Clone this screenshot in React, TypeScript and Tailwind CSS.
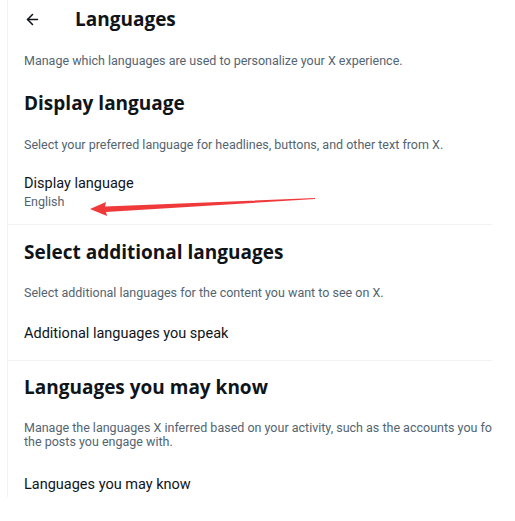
import { ArrowLeft } from 'lucide-react'

const FONT = { fontFamily: '"Open Sans", "Noto Sans", sans-serif' }
const BODY = { fontFamily: 'Roboto, "Open Sans", sans-serif' }

function Divider() {
  return <div className="h-px bg-[#eff3f4] w-full" />
}

function Heading({ children }: { children: React.ReactNode }) {
  return <h2 className="text-[19px] font-bold text-[#0f1419] leading-6">{children}</h2>
}

function Note({ children }: { children: React.ReactNode }) {
  return (
    <p className="text-[12.5px] text-[#536471] leading-[14px] whitespace-nowrap" style={BODY}>
      {children}
    </p>
  )
}

function Row({ label, value }: { label: string; value?: string }) {
  return (
    <div style={BODY}>
      <div className="text-[14.5px] text-[#0f1419] leading-5">{label}</div>
      {value && <div className="text-[12.5px] text-[#536471] leading-4">{value}</div>}
    </div>
  )
}

function RedArrow() {
  return (
    <svg className="absolute left-[88px] top-[196px] pointer-events-none" width="230" height="22" viewBox="0 0 230 22">
      <polygon points="2,13 18,6 17,10.5 227,2 227,3 18,16 19,20" fill="#f03a3a" />
    </svg>
  )
}

export default function App() {
  return (
    <div className="relative w-[515px] h-[521px] bg-white overflow-hidden" style={FONT}>
      <div className="ml-[7px] w-[485px] h-[497px] border-l border-[#eff3f4] overflow-hidden">
        <header className="flex items-center h-[38px] px-4">
          <ArrowLeft className="w-[17px] h-[17px] text-[#0f1419]" strokeWidth={2.2} />
          <h1 className="ml-[34px] text-[19px] font-bold text-[#0f1419]">Languages</h1>
        </header>

        <div className="px-4 pt-4 pb-3">
          <Note>Manage which languages are used to personalize your X experience.</Note>
        </div>

        <section>
          <div className="px-4 pt-[11px] pb-1">
            <Heading>Display language</Heading>
          </div>
          <div className="px-4 pt-[19px] pb-3">
            <Note>Select your preferred language for headlines, buttons, and other text from X.</Note>
          </div>
          <div className="px-4 pt-[10px] pb-[14px]">
            <Row label="Display language" value="English" />
          </div>
          <Divider />
        </section>

        <section>
          <div className="px-4 pt-[15px] pb-1">
            <Heading>Select additional languages</Heading>
          </div>
          <div className="px-4 pt-[18px] pb-3">
            <Note>Select additional languages for the content you want to see on X.</Note>
          </div>
          <div className="px-4 pt-[12px] pb-[16px]">
            <Row label="Additional languages you speak" />
          </div>
          <Divider />
        </section>

        <section>
          <div className="px-4 pt-[14px] pb-1">
            <Heading>Languages you may know</Heading>
          </div>
          <div className="px-4 pt-[18px] pb-3">
            <Note>
              Manage the languages X inferred based on your activity, such as the accounts you follow and
              <br />
              the posts you engage with.
            </Note>
          </div>
          <div className="px-4 pt-[14px] pb-3">
            <Row label="Languages you may know" />
          </div>
        </section>
      </div>
      <RedArrow />
    </div>
  )
}
